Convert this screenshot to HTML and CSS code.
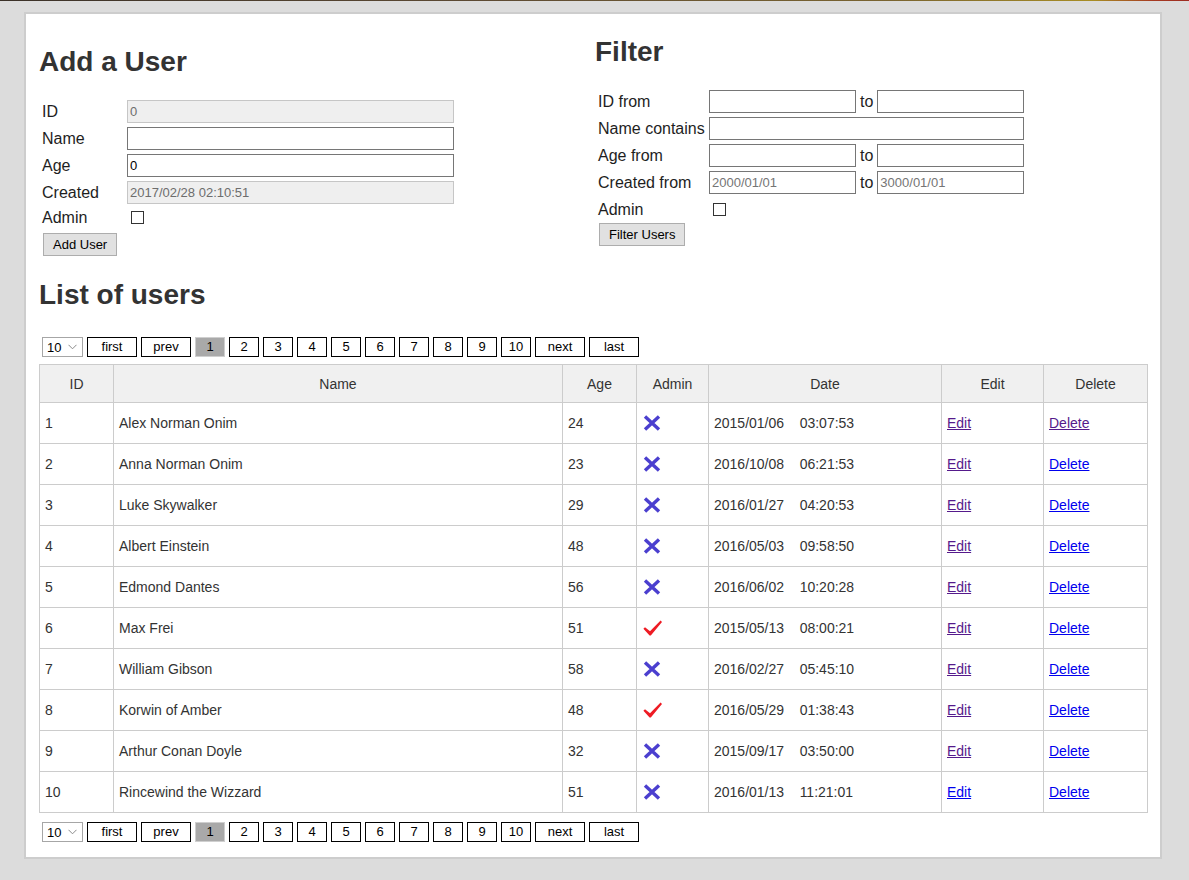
FILE: index.html
```html
<!DOCTYPE html>
<html lang="en">
<head>
<meta charset="utf-8">
<title>Users</title>
<link rel="stylesheet" href="styles.css">
</head>
<body>
<div class="topline"></div>
<div class="page">
  <div class="forms">
    <section class="add">
      <h2 class="h-add">Add a User</h2>
      <table class="form">
        <tr><td class="lbl lbl-add">ID</td><td><input class="field f-add dis" disabled value="0"></td></tr>
        <tr><td class="lbl lbl-add">Name</td><td><input class="field f-add" value=""></td></tr>
        <tr><td class="lbl lbl-add">Age</td><td><input class="field f-add" value="0"></td></tr>
        <tr><td class="lbl lbl-add">Created</td><td><input class="field f-add dis" disabled value="2017/02/28 02:10:51"></td></tr>
        <tr><td class="lbl lbl-add">Admin</td><td><input type="checkbox" class="chk"></td></tr>
        <tr><td colspan="2"><button class="btn btn-add">Add User</button></td></tr>
      </table>
    </section>
    <section class="filter">
      <h2 class="h-filter">Filter</h2>
      <table class="form">
        <tr><td class="lbl lbl-f">ID from</td><td><input class="field f-half"></td><td class="lbl to">to</td><td><input class="field f-half"></td></tr>
        <tr><td class="lbl lbl-f">Name contains</td><td colspan="3"><input class="field f-full"></td></tr>
        <tr><td class="lbl lbl-f">Age from</td><td><input class="field f-half"></td><td class="lbl to">to</td><td><input class="field f-half"></td></tr>
        <tr><td class="lbl lbl-f">Created from</td><td><input class="field f-half" placeholder="2000/01/01"></td><td class="lbl to">to</td><td><input class="field f-half" placeholder="3000/01/01"></td></tr>
        <tr><td class="lbl lbl-f lbl-admin">Admin</td><td colspan="3" class="chk-cell"><input type="checkbox" class="chk"></td></tr>
        <tr><td colspan="4"><button class="btn btn-filter">Filter Users</button></td></tr>
      </table>
    </section>
  </div>

  <h2 class="h-list">List of users</h2>

  <div class="pager">
    <span class="sel">10<svg class="chev" width="9" height="6" viewBox="0 0 9 6"><path d="M0.5 0.8 L4.5 4.8 L8.5 0.8" fill="none" stroke="#8a8a8a" stroke-width="1"/></svg></span>
    <span class="pg wide">first</span>
    <span class="pg wide">prev</span>
    <span class="pg active">1</span>
    <span class="pg">2</span>
    <span class="pg">3</span>
    <span class="pg">4</span>
    <span class="pg">5</span>
    <span class="pg">6</span>
    <span class="pg">7</span>
    <span class="pg">8</span>
    <span class="pg">9</span>
    <span class="pg">10</span>
    <span class="pg wide">next</span>
    <span class="pg wide">last</span>
  </div>

  <table class="users">
    <colgroup>
      <col class="c-id"><col class="c-name"><col class="c-age"><col class="c-admin"><col class="c-date"><col class="c-edit"><col class="c-del">
    </colgroup>
    <thead>
      <tr><th>ID</th><th>Name</th><th>Age</th><th>Admin</th><th>Date</th><th>Edit</th><th>Delete</th></tr>
    </thead>
    <tbody>
      <tr><td>1</td><td>Alex Norman Onim</td><td>24</td><td><svg class="ico" width="19" height="16" viewBox="0 0 19 16"><path d="M2 1.5 L16 14.5 M16 1.5 L2 14.5" stroke="#4b3fcf" stroke-width="3.4"/></svg></td><td class="date">2015/01/06    03:07:53</td><td><a href="#" class="visited">Edit</a></td><td><a href="#" class="visited">Delete</a></td></tr>
      <tr><td>2</td><td>Anna Norman Onim</td><td>23</td><td><svg class="ico" width="19" height="16" viewBox="0 0 19 16"><path d="M2 1.5 L16 14.5 M16 1.5 L2 14.5" stroke="#4b3fcf" stroke-width="3.4"/></svg></td><td class="date">2016/10/08    06:21:53</td><td><a href="#" class="visited">Edit</a></td><td><a href="#">Delete</a></td></tr>
      <tr><td>3</td><td>Luke Skywalker</td><td>29</td><td><svg class="ico" width="19" height="16" viewBox="0 0 19 16"><path d="M2 1.5 L16 14.5 M16 1.5 L2 14.5" stroke="#4b3fcf" stroke-width="3.4"/></svg></td><td class="date">2016/01/27    04:20:53</td><td><a href="#" class="visited">Edit</a></td><td><a href="#">Delete</a></td></tr>
      <tr><td>4</td><td>Albert Einstein</td><td>48</td><td><svg class="ico" width="19" height="16" viewBox="0 0 19 16"><path d="M2 1.5 L16 14.5 M16 1.5 L2 14.5" stroke="#4b3fcf" stroke-width="3.4"/></svg></td><td class="date">2016/05/03    09:58:50</td><td><a href="#" class="visited">Edit</a></td><td><a href="#">Delete</a></td></tr>
      <tr><td>5</td><td>Edmond Dantes</td><td>56</td><td><svg class="ico" width="19" height="16" viewBox="0 0 19 16"><path d="M2 1.5 L16 14.5 M16 1.5 L2 14.5" stroke="#4b3fcf" stroke-width="3.4"/></svg></td><td class="date">2016/06/02    10:20:28</td><td><a href="#" class="visited">Edit</a></td><td><a href="#">Delete</a></td></tr>
      <tr><td>6</td><td>Max Frei</td><td>51</td><td><svg class="ico" width="19" height="16" viewBox="0 0 19 16"><path d="M0.4 8.8 L2 7.3 L7 11.3 L17.6 0.6 L19 2 L7.8 15.4 L6.6 15.4 Z" fill="#ee1b24"/></svg></td><td class="date">2015/05/13    08:00:21</td><td><a href="#" class="visited">Edit</a></td><td><a href="#">Delete</a></td></tr>
      <tr><td>7</td><td>William Gibson</td><td>58</td><td><svg class="ico" width="19" height="16" viewBox="0 0 19 16"><path d="M2 1.5 L16 14.5 M16 1.5 L2 14.5" stroke="#4b3fcf" stroke-width="3.4"/></svg></td><td class="date">2016/02/27    05:45:10</td><td><a href="#" class="visited">Edit</a></td><td><a href="#">Delete</a></td></tr>
      <tr><td>8</td><td>Korwin of Amber</td><td>48</td><td><svg class="ico" width="19" height="16" viewBox="0 0 19 16"><path d="M0.4 8.8 L2 7.3 L7 11.3 L17.6 0.6 L19 2 L7.8 15.4 L6.6 15.4 Z" fill="#ee1b24"/></svg></td><td class="date">2016/05/29    01:38:43</td><td><a href="#" class="visited">Edit</a></td><td><a href="#">Delete</a></td></tr>
      <tr><td>9</td><td>Arthur Conan Doyle</td><td>32</td><td><svg class="ico" width="19" height="16" viewBox="0 0 19 16"><path d="M2 1.5 L16 14.5 M16 1.5 L2 14.5" stroke="#4b3fcf" stroke-width="3.4"/></svg></td><td class="date">2015/09/17    03:50:00</td><td><a href="#" class="visited">Edit</a></td><td><a href="#">Delete</a></td></tr>
      <tr><td>10</td><td>Rincewind the Wizzard</td><td>51</td><td><svg class="ico" width="19" height="16" viewBox="0 0 19 16"><path d="M2 1.5 L16 14.5 M16 1.5 L2 14.5" stroke="#4b3fcf" stroke-width="3.4"/></svg></td><td class="date">2016/01/13    11:21:01</td><td><a href="#">Edit</a></td><td><a href="#">Delete</a></td></tr>
    </tbody>
  </table>

  <div class="pager pager-bottom">
    <span class="sel">10<svg class="chev" width="9" height="6" viewBox="0 0 9 6"><path d="M0.5 0.8 L4.5 4.8 L8.5 0.8" fill="none" stroke="#8a8a8a" stroke-width="1"/></svg></span>
    <span class="pg wide">first</span>
    <span class="pg wide">prev</span>
    <span class="pg active">1</span>
    <span class="pg">2</span>
    <span class="pg">3</span>
    <span class="pg">4</span>
    <span class="pg">5</span>
    <span class="pg">6</span>
    <span class="pg">7</span>
    <span class="pg">8</span>
    <span class="pg">9</span>
    <span class="pg">10</span>
    <span class="pg wide">next</span>
    <span class="pg wide">last</span>
  </div>
</div>
</body>
</html>
```
FILE: styles.css
```css
html, body {
  margin: 0;
  padding: 0;
}
body {
  background: #dcdcdc;
  font-family: "Liberation Sans", Arial, sans-serif;
  color: #333;
}
.topline {
  height: 1px;
  background: linear-gradient(90deg, #3b3128 0%, #5d4a33 40%, #7a6430 75%, #a88d24 92%, #a63a22 97%, #9d2c22 100%);
}
.page {
  margin: 11px 0 0 24px;
  width: 1138px;
  box-sizing: border-box;
  border: 2px solid #cdcdcd;
  background: #fff;
  padding: 0 13px 15px 13px;
}
.forms {
  display: grid;
  grid-template-columns: 556px 1fr;
  align-items: start;
}
h2 {
  font-size: 28px;
  line-height: 32px;
  font-weight: bold;
  color: #333;
  margin: 0;
}
.h-add { margin: 32px 0 20px; }
.h-filter { margin: 22px 0 20px; }
.h-list { margin: 21px 0 26px; }

.form {
  border-collapse: collapse;
}
.form td {
  padding: 2px;
  vertical-align: middle;
}
.form td.lbl-add,
.form td.lbl-f { padding-left: 3px; }
.lbl {
  font-size: 16px;
  color: #1e1e1e;
  white-space: nowrap;
}
.lbl-add { width: 81px; }
.lbl-f { width: 107px; }
.to { width: auto; }
.field {
  display: block;
  box-sizing: border-box;
  height: 23px;
  margin: 0;
  border: 1px solid #767676;
  border-radius: 0;
  padding: 0 2px;
  font-family: "Liberation Sans", Arial, sans-serif;
  font-size: 13px;
  color: #000;
  background: #fff;
  outline: none;
}
.field::placeholder { color: #757575; }
.f-add { width: 327px; }
.f-half { width: 147px; }
.f-full { width: 315px; }
.dis {
  background: #efefef;
  border-color: #c6c6c6;
  color: #6d6d6d;
}
.chk {
  -webkit-appearance: none;
  appearance: none;
  display: block;
  width: 13px;
  height: 13px;
  margin: 3px 3px 3px 4px;
  border: 1px solid #333;
  border-radius: 0;
  background: #fff;
  box-sizing: border-box;
}
.form td.chk-cell { padding-top: 4px; }
.form td.lbl-admin { padding-top: 4px; }
.btn {
  display: block;
  box-sizing: border-box;
  height: 23px;
  padding: 0 9px;
  border: 1px solid #adadad;
  border-radius: 0;
  background: #e1e1e1;
  color: #000;
  font-family: "Liberation Sans", Arial, sans-serif;
  font-size: 13px;
}
.btn-add { margin: 2px 0 0 2px; }
.btn-filter { margin: 0 0 0 2px; }

.pager {
  display: flex;
  gap: 4px;
  align-items: center;
  padding-left: 3px;
  height: 20px;
}
.pager-bottom { margin-top: 9px; }
.sel {
  display: flex;
  align-items: center;
  justify-content: space-between;
  box-sizing: border-box;
  width: 41px;
  height: 20px;
  padding: 0 5px 0 4px;
  border: 1px solid #a6a6a6;
  font-size: 13px;
  color: #000;
}
.chev { display: block; }
.pg {
  box-sizing: border-box;
  width: 30px;
  height: 20px;
  border: 1px solid #000;
  font-size: 13px;
  line-height: 18px;
  text-align: center;
  color: #000;
  background: #fff;
}
.pg.wide { width: 50px; }
.pg.active {
  background: #a9a9a9;
  border-color: #cfcfcf;
}

.users {
  margin-top: 7px;
  width: 1108px;
  border-collapse: collapse;
  table-layout: fixed;
  font-size: 14px;
  color: #333;
}
.c-id { width: 74px; }
.c-name { width: 449px; }
.c-age { width: 74px; }
.c-admin { width: 72px; }
.c-date { width: 233px; }
.c-edit { width: 102px; }
.c-del { width: 104px; }
.users th, .users td {
  border: 1px solid #cccccc;
}
.users th {
  height: 37px;
  padding: 0;
  background: #f0f0f0;
  font-weight: normal;
  text-align: center;
  color: #333;
}
.users td {
  height: 40px;
  padding: 0 5px;
  text-align: left;
}
.date { white-space: pre; }
.ico {
  display: block;
  margin-left: 1px;
}
.users a { color: #0000ee; text-decoration: underline; }
.users a.visited { color: #551a8b; }
```
